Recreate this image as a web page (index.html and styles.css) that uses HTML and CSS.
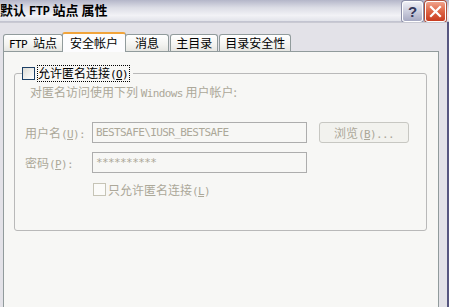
FILE: index.html
```html
<!DOCTYPE html>
<html lang="zh-CN">

<head>
    <meta charset="UTF-8">
    <meta name="viewport" content="width=device-width, initial-scale=1.0">
    <title>默认 FTP 站点 属性</title>
    <link rel="stylesheet" href="styles.css">
</head>

<body>
    <div class="window">
        <div class="titlebar">
            <span class="title">默认 <span class="en">FTP</span> 站点 属性</span>
            <div class="caption-buttons">
                <div class="cap help">?</div>
                <div class="cap close">
                    <svg width="13" height="13" viewBox="0 0 13 13">
                        <path d="M2 2 L11 11 M11 2 L2 11" stroke="#fff" stroke-width="2.2" stroke-linecap="square" />
                    </svg>
                </div>
            </div>
        </div>

        <div class="client">
            <div class="tabs">
                <div class="tab"><span class="en">FTP </span>站点</div>
                <div class="tab active">安全帐户</div>
                <div class="tab">消息</div>
                <div class="tab">主目录</div>
                <div class="tab">目录安全性</div>
            </div>

            <div class="panel">
                <fieldset class="group">
                    <legend class="group-title">
                        <span class="check"></span>
                        <span class="focus-label">允许匿名连接<span class="en">(<u>O</u>)</span></span>
                    </legend>

                    <div class="note">对匿名访问使用下列 <span class="en">Windows</span> 用户帐户:</div>

                    <div class="form-grid">
                        <label class="field-label">用户名<span class="en">(<u>U</u>):</span></label>
                        <div class="edit">BESTSAFE\IUSR_BESTSAFE</div>
                        <div class="btn">浏览<span class="en">(<u>B</u>)...</span></div>

                        <label class="field-label">密码<span class="en">(<u>P</u>):</span></label>
                        <div class="edit">**********</div>
                        <div></div>

                        <div></div>
                        <div class="check-row">
                            <span class="check disabled"></span>
                            <span>只允许匿名连接<span class="en">(<u>L</u>)</span></span>
                        </div>
                        <div></div>
                    </div>
                </fieldset>
            </div>
        </div>
    </div>
</body>

</html>
```

FILE: styles.css
```css
html,
body {
    margin: 0;
    padding: 0;
    width: 449px;
    height: 307px;
    overflow: hidden;
}

body {
    font-family: "Noto Sans CJK SC", sans-serif;
    font-size: 12px;
    color: #000;
    background-color: #e3e2e8;
}

.en {
    font-family: "DejaVu Sans Mono", monospace;
    font-size: 11px;
    letter-spacing: -0.6px;
}

u {
    text-decoration: underline;
}

.window {
    display: flex;
    flex-direction: column;
    height: 307px;
    box-sizing: border-box;
    border-right: 2px solid #575780;
}

/* title bar */
.titlebar {
    display: flex;
    align-items: center;
    justify-content: space-between;
    height: 22px;
    margin-right: -2px;
    background: linear-gradient(to bottom, #b4b6c9, #dcdde6 35%, #f2f2f6 70%, #e2e3ea 95%, #a9aabb);
}

.title {
    margin-left: 0;
    font-size: 13px;
    font-weight: bold;
    line-height: 22px;
    white-space: pre;
}

.title .en {
    font-family: "Liberation Mono", monospace;
    font-size: 12px;
    font-weight: bold;
    letter-spacing: -0.3px;
}

.caption-buttons {
    display: flex;
    gap: 2px;
    margin-right: 3px;
}

.cap {
    width: 21px;
    height: 21px;
    box-sizing: border-box;
    border: 1px solid #fff;
    border-radius: 3px;
    display: flex;
    align-items: center;
    justify-content: center;
}

.help {
    background: linear-gradient(to bottom, #eeeff5, #c4c6d8 60%, #a6a9c2);
    color: #34375a;
    font-family: "Liberation Sans", sans-serif;
    font-weight: bold;
    font-size: 15px;
    box-shadow: 0 0 0 1px #8b8ea8;
}

.close {
    background: linear-gradient(to bottom, #f0a38c, #e06a4a 45%, #c83c20);
    box-shadow: 0 0 0 1px #b0503a;
}

/* tabs */
.client {
    flex: 1;
    display: flex;
    flex-direction: column;
    padding-top: 8px;
    border-top: 1px solid #c9c9d2;
}

.tabs {
    display: flex;
    align-items: flex-end;
    margin-left: 3px;
    height: 20px;
    position: relative;
    z-index: 1;
}

.tab {
    height: 17px;
    box-sizing: border-box;
    padding: 0 5px;
    min-width: 44px;
    border: 1px solid #919b9c;
    border-bottom: none;
    border-radius: 3px 3px 0 0;
    background: linear-gradient(to bottom, #ffffff, #f3f3f0 60%, #e6e6e2);
    line-height: 16px;
    text-align: center;
    white-space: pre;
}

.tab + .tab {
    margin-left: 1px;
}

.tab.active {
    height: 20px;
    margin: 0 -2px -1px -1px;
    padding: 0 7px;
    background: #fcfcfe;
    border-top: 2px solid #f1a43c;
    line-height: 18px;
}

.tab.active + .tab {
    margin-left: 1px;
}

/* panel */
.panel {
    flex: 1;
    width: 436px;
    margin-left: 3px;
    box-sizing: border-box;
    border: 1px solid #919b9c;
    border-bottom: none;
    background-color: #f7f7f5;
    padding: 14px 11px 0 10px;
}

.group {
    margin: 0;
    padding: 0 0 32px 10px;
    border: 1px solid #b9b9b9;
    border-radius: 3px;
}

.group-title {
    display: flex;
    align-items: center;
    gap: 2px;
    margin-left: -3px;
    padding: 0 3px 0 0;
    height: 15px;
}

.check {
    display: inline-block;
    width: 13px;
    height: 13px;
    box-sizing: border-box;
    border: 1px solid #1c3f66;
    background: linear-gradient(135deg, #dcdcd6, #ffffff);
}

.check.disabled {
    border-color: #c6c4b6;
    background: #fbfbf9;
}

.focus-label {
    border: 1px dotted #000;
    line-height: 13px;
    padding: 0 1px 0 0;
}

.note {
    margin: 4px 0 0 5px;
    color: #aca899;
    line-height: 14px;
}

.form-grid {
    display: grid;
    grid-template-columns: 67px 215px 102px;
    row-gap: 9px;
    margin-top: 21px;
    align-items: center;
}

.field-label {
    color: #aca899;
    white-space: pre;
}

.edit {
    height: 21px;
    box-sizing: border-box;
    border: 1px solid #adadad;
    padding: 0 3px;
    line-height: 19px;
    color: #aca899;
    font-family: "DejaVu Sans Mono", monospace;
    font-size: 11px;
    letter-spacing: -0.6px;
}

.btn {
    justify-self: end;
    width: 90px;
    height: 21px;
    box-sizing: border-box;
    border: 1px solid #c7c7c2;
    border-radius: 3px;
    background: #f2f2ee;
    color: #aca899;
    text-align: center;
    line-height: 19px;
}

.check-row {
    display: flex;
    align-items: center;
    gap: 2px;
    margin-left: 1px;
    margin-top: -1px;
    color: #aca899;
}
```
